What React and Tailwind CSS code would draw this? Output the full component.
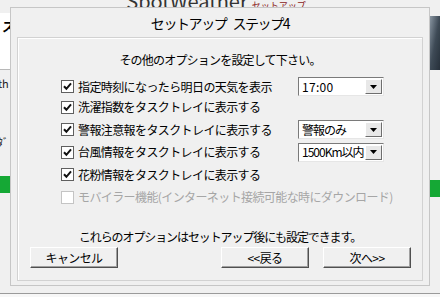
import React from "react";

const jp = { fontFamily: '"Noto Sans CJK JP", "Noto Sans", sans-serif' };

function Check({ checked = true, disabled = false }) {
  return (
    <div
      className={`w-[13px] h-[13px] shrink-0 border bg-white flex items-center justify-center ${
        disabled ? "border-[#c4c4c4]" : "border-[#5f5f5f]"
      }`}
    >
      {checked && (
        <svg width="11" height="11" viewBox="0 0 11 11">
          <path d="M2 5.2 L4.4 7.8 L9 2.4" fill="none" stroke="#111" strokeWidth="2" />
        </svg>
      )}
    </div>
  );
}

function Combo({ value, tight }) {
  return (
    <div className="w-[86px] h-[19px] flex items-center bg-white border border-t-[#7a7a7a] border-l-[#7a7a7a] border-b-[#e6e6e6] border-r-[#e6e6e6]">
      <span
        className={`flex-1 pl-[3px] text-[12px] leading-none whitespace-nowrap overflow-hidden ${
          tight ? "tracking-[-1px]" : "tracking-[0.3px]"
        }`}
      >
        {value}
      </span>
      <div className="w-[17px] h-[15px] mr-[1px] shrink-0 bg-[#e8e8e8] border border-t-white border-l-white border-b-[#6e6e6e] border-r-[#6e6e6e] flex items-center justify-center">
        <svg width="7" height="4" viewBox="0 0 7 4">
          <path d="M0 0 H7 L3.5 4 Z" fill="#000" />
        </svg>
      </div>
    </div>
  );
}

function Btn({ children }) {
  return (
    <div className="w-[88px] h-[21px] bg-[#f0f0f0] border border-t-white border-l-white border-b-[#505050] border-r-[#505050] shadow-[inset_-1px_-1px_0_#a0a0a0] flex items-center justify-center text-[12px] tracking-[-0.6px] leading-none">
      {children}
    </div>
  );
}

const rows = [
  { label: "指定時刻になったら明日の天気を表示", combo: "17:00", h: "h-[19px]" },
  { label: "洗濯指数をタスクトレイに表示する", h: "h-[22px]" },
  { label: "警報注意報をタスクトレイに表示する", combo: "警報のみ", tight: true, h: "h-[23px]" },
  { label: "台風情報をタスクトレイに表示する", combo: "1500Km以内", tight: true, h: "h-[22px]" },
  { label: "花粉情報をタスクトレイに表示する", h: "h-[23px]" },
  { label: "モバイラー機能(インターネット接続可能な時にダウンロード)", disabled: true, h: "h-[22px]" },
];

export default function App() {
  return (
    <div className="relative w-[440px] h-[297px] overflow-hidden bg-[#f0f0f0] text-black" style={jp}>
      {/* window behind */}
      <div className="flex flex-col h-full">
        <div className="h-[7px] overflow-hidden flex justify-center items-end">
          <div className="flex items-baseline gap-[4px] mb-[-4px] ml-[-8px]">
            <span className="text-[20px] leading-none text-[#333]">SpotWeather</span>
            <span className="text-[9px] leading-none text-[#8a2020]">セットアップ</span>
          </div>
        </div>
        <div className="flex flex-1">
          <div className="w-[10px] flex flex-col overflow-hidden">
            <div className="mt-[6px] h-[57px] bg-white border-b border-[#b8b8b8] overflow-hidden">
              <div className="mt-[6px] ml-[2px] text-[13px] font-bold leading-none">ス</div>
            </div>
            <div className="mt-[8px] ml-[-14px] text-[11px] leading-none text-[#222] whitespace-nowrap">eath</div>
            <div className="mt-[48px] ml-[-8px] text-[11px] leading-none text-[#222] whitespace-nowrap">ﾚﾀﾞ</div>
            <div className="mt-[28px] h-[17px] bg-[#15a835]" />
          </div>
          <div className="flex-1" />
          <div className="w-[10px] flex flex-col">
            <div className="mt-[9px] h-[54px] bg-gradient-to-br from-[#8a96a2] via-[#3e4a56] to-[#26303a]" />
            <div className="mt-[110px] h-[17px] bg-[#15a835]" />
          </div>
        </div>
        <div className="h-[4px] border-t border-[#9a9a9a] bg-[#f7f7f7]" />
      </div>

      {/* setup dialog */}
      <div className="absolute left-[10px] top-[7px] w-[420px] h-[279px] bg-[#f0f0f0] border border-[#c6c6c6] flex flex-col">
        <div className="h-[29px] flex items-center justify-center text-[14px] tracking-[-1.4px] leading-none pt-[1px]">
          <span>セットアップ</span>
          <span className="ml-[6px]">ステップ4</span>
        </div>
        <div className="ml-[6px] w-[406px] h-[244px] border border-[#d2d2d2] shadow-[inset_1px_1px_0_#ffffff] flex flex-col">
          <div className="mt-[14px] h-[16px] text-[12px] tracking-[-0.8px] leading-[16px] text-center">
            その他のオプションを設定して下さい。
          </div>
          <div className="mt-[9px] pl-[43px] flex flex-col">
            {rows.map((r) => (
              <div key={r.label} className={`${r.h} flex items-center`}>
                <Check disabled={r.disabled} checked={!r.disabled} />
                <span
                  className={`ml-[4px] text-[12px] tracking-[-0.6px] leading-none whitespace-nowrap ${
                    r.disabled ? "text-[#a6a6a6]" : ""
                  } ${r.combo ? "w-[220px]" : ""}`}
                >
                  {r.label}
                </span>
                {r.combo && <Combo value={r.combo} tight={r.tight} />}
              </div>
            ))}
          </div>
          <div className="mt-[21px] h-[16px] text-[12px] tracking-[-1.1px] leading-[16px] text-center">
            これらのオプションはセットアップ後にも設定できます。
          </div>
          <div className="mt-[2px] pl-[12px] pr-[11px] flex justify-between">
            <Btn>キャンセル</Btn>
            <div className="flex gap-[14px]">
              <Btn>&lt;&lt;戻る</Btn>
              <Btn>次へ&gt;&gt;</Btn>
            </div>
          </div>
        </div>
      </div>
    </div>
  );
}
